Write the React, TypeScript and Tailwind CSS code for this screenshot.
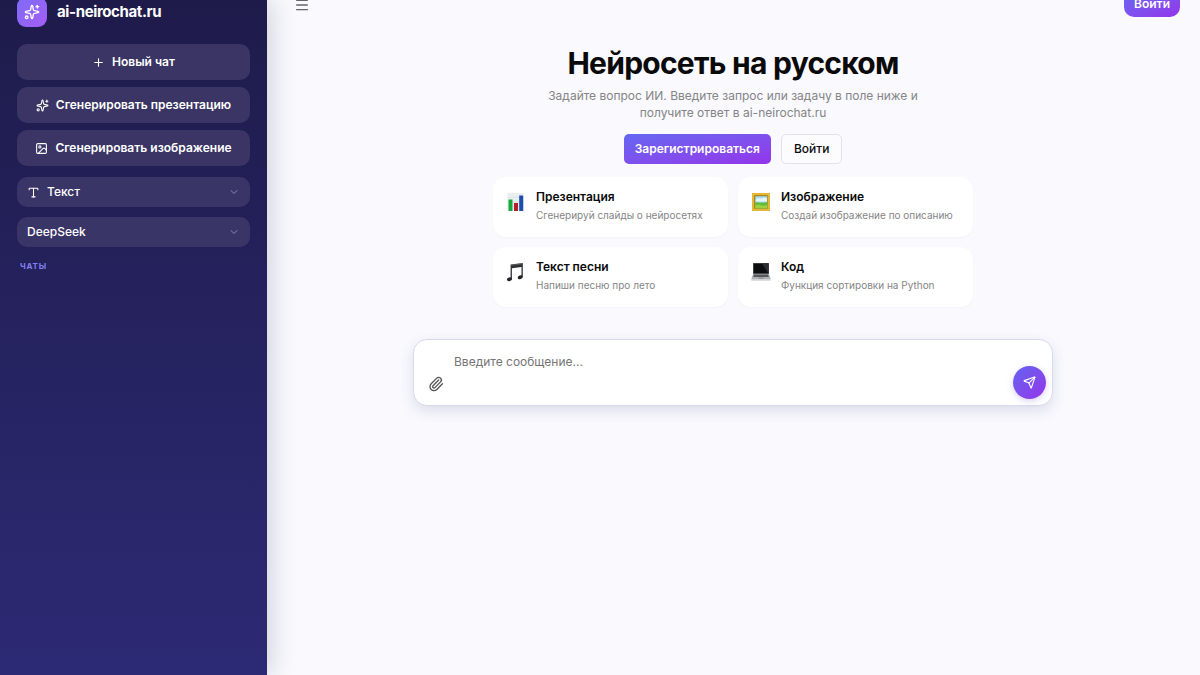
import type { ReactNode } from 'react';
import { ChevronDown, Image as ImageIcon, Menu, Paperclip, Plus, Send, Sparkles, Type } from 'lucide-react';

function ChartIcon() {
  return (
    <svg viewBox="0 0 20 20" className="size-5" aria-hidden="true">
      <rect x="1.5" y="1" width="16" height="18" fill="#e9eef2" />
      <path d="M1.5 5.5h16M1.5 10h16M1.5 14.5h16" stroke="#d3dce3" strokeWidth=".6" />
      <rect x="2.500" y="7.500" width="4" height="11.500" fill="#19a83b" />
      <rect x="8" y="11" width="4" height="8" fill="#b3202c" />
      <rect x="13.200" y="3.500" width="4" height="15.500" fill="#1d4fa8" />
    </svg>
  );
}

function PictureIcon() {
  return (
    <svg viewBox="0 0 20 20" className="size-5" aria-hidden="true">
      <rect x="1" y="1" width="18" height="18" fill="#d9a520" />
      <rect x="2" y="2" width="16" height="16" fill="none" stroke="#f0c94a" />
      <rect x="3.500" y="3.500" width="13" height="13" fill="#8a6414" />
      <rect x="4.200" y="4.200" width="12" height="12" fill="#a9def0" />
      <path d="M5 7.500c2-2 4 0 6-1s3-1 5 0v3H5z" fill="#e4f6fa" />
      <path d="M4.200 10.500c3-1 5 1 12-.500v6.200h-12z" fill="#63bb3c" />
      <path d="M4.200 13.500c4-2 7 1.500 12-.500v3.200h-12z" fill="#9bd13f" />
    </svg>
  );
}

function NotesIcon() {
  return (
    <svg viewBox="0 0 20 20" className="size-5" aria-hidden="true">
      <path d="M4.600 2.600 16.800.9v14h-1.300V4.900L5.900 6.200v11H4.600z" fill="#2f3033" />
      <path d="M5.200 3.300 16.300 1.700" stroke="#77797d" strokeWidth=".6" />
      <ellipse cx="3.500" cy="17.300" rx="2.600" ry="1.800" transform="rotate(-18 3.500 17.300)" fill="#222326" />
      <ellipse cx="14.200" cy="15.200" rx="2.600" ry="1.800" transform="rotate(-18 14.200 15.200)" fill="#222326" />
    </svg>
  );
}

function LaptopIcon() {
  return (
    <svg viewBox="0 0 20 20" className="size-5" aria-hidden="true">
      <path d="M2 1h16v11H2z" fill="#55585c" />
      <path d="M2.700 1.600h14.600v9.600H2.700z" fill="#0c0d0f" />
      <path d="M11 1.600h6.300v9.600z" fill="#2c2e31" />
      <path d="M2 12h16l1.700 5H.3z" fill="#aeb1b5" />
      <path d="M3 12.500h14l.8 2.500H2.200z" fill="#55585c" />
      <path d="M.3 17h19.400v1.700H.3z" fill="#cfd1d4" />
      <path d="M7.600 15.400h4.800l.4 1.300H7.200z" fill="#8b8e92" />
    </svg>
  );
}

const suggestions: { title: string; text: string; icon: ReactNode }[] = [
  { title: 'Презентация', text: 'Сгенерируй слайды о нейросетях', icon: <ChartIcon /> },
  { title: 'Изображение', text: 'Создай изображение по описанию', icon: <PictureIcon /> },
  { title: 'Текст песни', text: 'Напиши песню про лето', icon: <NotesIcon /> },
  { title: 'Код', text: 'Функция сортировки на Python', icon: <LaptopIcon /> },
];

function SideButton({ icon, children }: { icon: ReactNode; children: ReactNode }) {
  return (
    <button
      type="button"
      className="flex h-9 w-full items-center justify-center gap-[7px] whitespace-nowrap rounded-[10px] bg-[#3a3564] text-[12px] font-semibold text-white"
    >
      {icon}
      {children}
    </button>
  );
}

function SideSelect({ label, value, icon }: { label: string; value: string; icon?: ReactNode }) {
  return (
    <div className="grid grid-cols-1 items-center rounded-[10px] bg-[#3a3567] text-white">
      <select
        aria-label={label}
        className={`col-start-1 row-start-1 h-[30px] w-full appearance-none rounded-[10px] bg-transparent text-[12px] leading-5 font-medium outline-none ${icon ? 'pl-[30px]' : 'pl-[10px]'}`}
      >
        <option>{value}</option>
      </select>
      {icon && <span className="pointer-events-none col-start-1 row-start-1 ml-[10px] justify-self-start">{icon}</span>}
      <ChevronDown className="pointer-events-none col-start-1 row-start-1 mr-[10px] size-3 justify-self-end text-[#8e8ab0]" />
    </div>
  );
}

export default function App() {
  return (
    <div className="flex h-screen overflow-hidden bg-[#f9f9fe] font-['Inter',sans-serif] text-[#0a0a0a]">
      <aside className="z-10 flex w-[267px] shrink-0 flex-col bg-linear-to-b from-[#1e1b4b] to-[#2d2a75] px-[17px] shadow-[4px_0_24px_rgba(30,41,59,0.18)]">
        <div className="-mt-[3px] flex items-center gap-[10px]">
          <span className="flex size-[30px] items-center justify-center rounded-[9px] bg-linear-to-br from-[#7c6cf5] to-[#a45cf7] text-white">
            <Sparkles className="size-4" />
          </span>
          <span className="text-[15px] font-bold tracking-tight text-white">ai-neirochat.ru</span>
        </div>
        <nav className="mt-[17px] flex flex-col gap-[7px]">
          <SideButton icon={<Plus className="size-[13px]" />}>Новый чат</SideButton>
          <SideButton icon={<Sparkles className="size-[13px]" />}>Сгенерировать презентацию</SideButton>
          <SideButton icon={<ImageIcon className="size-[13px]" />}>Сгенерировать изображение</SideButton>
        </nav>
        <div className="mt-[11px] flex flex-col gap-[10px]">
          <SideSelect label="Режим" value="Текст" icon={<Type className="size-[13px]" />} />
          <SideSelect label="Модель" value="DeepSeek" />
        </div>
        <h2 className="mt-[13px] pl-[3px] text-[8px] leading-3 font-bold tracking-widest text-[#8280f0]">ЧАТЫ</h2>
      </aside>

      <main className="flex min-w-0 flex-1 flex-col">
        <header className="flex h-[17px] items-end justify-between pr-5 pl-[27px]">
          <button type="button" aria-label="Меню" className="mb-1 text-[#666]">
            <Menu className="size-4" />
          </button>
          <button
            type="button"
            className="h-[27px] shrink-0 rounded-[10px] bg-linear-to-br from-[#6366f1] to-[#9333ea] px-[10px] text-[12px] font-semibold text-white"
          >
            Войти
          </button>
        </header>

        <section className="flex flex-col items-center pt-7 pr-[25px] pl-6">
          <h1 className="text-center text-[30px] leading-9 font-bold tracking-tight">Нейросеть на русском</h1>
          <p className="mt-[6px] max-w-[373px] text-center text-[12px] leading-[17px] text-[#858585]">
            Задайте вопрос ИИ. Введите запрос или задачу в поле ниже и получите ответ в ai-neirochat.ru
          </p>
          <div className="mt-[13px] flex gap-[10px]">
            <button
              type="button"
              className="h-[30px] rounded-[5px] bg-linear-to-br from-[#6366f1] to-[#9333ea] px-[11px] text-[12px] font-semibold text-white"
            >
              Зарегистрироваться
            </button>
            <button
              type="button"
              className="h-[30px] rounded-[5px] border border-[#e2e2e8] bg-[#fcfcff] px-3 text-[12px] font-medium"
            >
              Войти
            </button>
          </div>

          <div className="mt-[13px] grid w-full max-w-[480px] grid-cols-2 gap-[10px]">
            {suggestions.map((item) => (
              <button
                key={item.title}
                type="button"
                className="flex h-[60px] items-start gap-[10px] rounded-[13px] bg-white px-[13px] pt-3 text-left shadow-[0_1px_2px_rgba(80,80,140,0.04)]"
              >
                <span className="mt-[3px] shrink-0">{item.icon}</span>
                <span className="flex min-w-0 flex-col gap-[2px]">
                  <span className="text-[12px] leading-4 font-semibold">{item.title}</span>
                  <span className="text-[10px] leading-4 whitespace-nowrap text-[#858585]">{item.text}</span>
                </span>
              </button>
            ))}
          </div>

          <form
            className="mt-8 flex h-[67px] w-full max-w-[640px] items-end rounded-[14px] border border-[#d9d9ee] bg-white pr-[6px] pl-[14px] shadow-[0_5px_14px_rgba(60,60,120,0.14)]"
            onSubmit={(event) => event.preventDefault()}
          >
            <button type="button" aria-label="Прикрепить файл" className="mb-[13px] text-[#555]">
              <Paperclip className="size-4" />
            </button>
            <textarea
              aria-label="Сообщение"
              placeholder="Введите сообщение..."
              className="ml-[10px] h-full min-w-0 flex-1 resize-none bg-transparent pt-[14px] text-[12px] leading-4 outline-none placeholder:text-[#757575]"
            />
            <button
              type="submit"
              aria-label="Отправить"
              className="mb-[6px] flex size-[33px] shrink-0 items-center justify-center rounded-full bg-linear-to-br from-[#6161f0] to-[#9333ea] text-white shadow-[0_2px_6px_rgba(99,70,220,0.25)]"
            >
              <Send className="size-[13px]" />
            </button>
          </form>
        </section>
      </main>
    </div>
  );
}
